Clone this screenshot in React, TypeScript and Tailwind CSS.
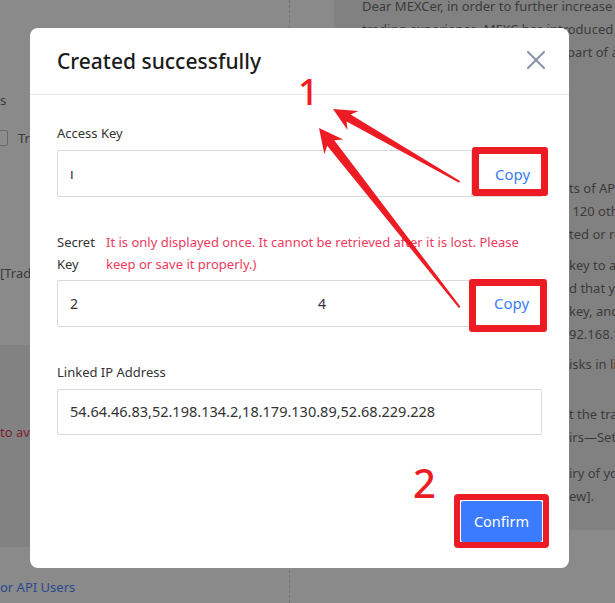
import React from "react";

const RED = "#ed1c24";

function Arrow({ x, y, angle, len, hw, wing, wingLen, notch }: { x: number; y: number; angle: number; len: number; hw: number; wing: number; wingLen: number; notch: number }) {
  const pts = `0,0 ${wingLen},${-wing} ${notch},${-hw} ${len},-1 ${len},1 ${notch},${hw} ${wingLen},${wing}`;
  return <polygon points={pts} fill={RED} transform={`translate(${x} ${y}) rotate(${angle})`} />;
}

export default function App() {
  return (
    <div className="relative w-[615px] h-[603px] overflow-hidden bg-[#8a8a8a] font-['Noto_Sans',sans-serif]">
      {/* page behind the overlay */}
      <div className="flex h-full">
        <div className="w-[290px] h-full border-r border-dashed border-[#767676] flex flex-col text-[13px] leading-[20px] text-[#3a3a3a] whitespace-nowrap overflow-hidden">
          <div className="mt-[90px]">s</div>
          <div className="mt-[20px] flex items-center gap-[10px] -ml-[8px] h-[16px]">
            <span className="w-[16px] h-[16px] border border-[#6a6a6a] rounded-[2px] bg-[#8c8c8c]" />
            <span>Trade</span>
          </div>
          <div className="mt-[117px]">[Trade]</div>
          <div className="mt-[62px] h-[202px] bg-[#828282] pt-[77px] text-[#7e1e35]">to avoid</div>
          <div className="mt-[30px] text-[#2a4a8e]">or API Users</div>
        </div>
        <div className="w-[44px]" />
        <div className="w-[281px] h-[530px] bg-[#818181] pl-[28px] text-[13px] leading-[23px] text-[#3c3c3c] whitespace-nowrap overflow-hidden">
          <div className="-mt-[5.5px]">
            <p>Dear MEXCer, in order to further increase the</p>
            <p>trading experience, MEXC has introduced a</p>
            <p className="pl-[205px]">part of an</p>
          </div>
          <div className="mt-[113px] pl-[207px]">
            <p>ts of API</p>
            <p>&nbsp;120 other</p>
            <p>ted or re</p>
          </div>
          <div className="mt-[8.5px] pl-[207px]">
            <p>key to an</p>
            <p>d that you</p>
            <p>key, and</p>
            <p>92.168.1</p>
          </div>
          <div className="mt-[6.5px] pl-[207px]">
            <p>isks in li</p>
          </div>
          <div className="mt-[27px] pl-[207px]">
            <p>t the tra</p>
            <p>irs—Set</p>
          </div>
          <div className="mt-[13px] pl-[207px]">
            <p>iry of yo</p>
            <p>ew].</p>
          </div>
        </div>
      </div>

      {/* modal */}
      <div className="absolute left-[30px] top-[28px] w-[539px] bg-white rounded-[8px] flex flex-col">
        <div className="h-[67px] flex items-center justify-between pl-[27px] pr-[24px] border-b border-[#ebebeb]">
          <span className="text-[21px] font-medium text-[#1b1b1b] leading-none">Created successfully</span>
          <svg width="18" height="18" viewBox="0 0 18 18" className="mt-[-2px]">
            <path d="M1 1 L17 17 M17 1 L1 17" stroke="#8a93a5" strokeWidth="2" strokeLinecap="round" />
          </svg>
        </div>
        <div className="px-[27px] pt-[28px] pb-[26px] flex flex-col text-[#333]">
          <div className="text-[13px] leading-[20px] mb-[7px]">Access Key</div>
          <div className="flex h-[47px]">
            <div className="flex-1 border border-[#dadada] rounded-l-[2px] flex items-center pl-[12px] text-[14px]">ı</div>
            <div className="relative w-[70px] border-y border-r border-[#dadada] flex items-center justify-center pl-[12px] pt-[2px] text-[15px] text-[#3b7cf5]">
              Copy
              <div className="absolute left-0 -right-[7px] -top-[4px] bottom-0 border-[7px] rounded-[3px]" style={{ borderColor: RED }} />
            </div>
          </div>

          <div className="mt-[34px] flex text-[13px] leading-[22px]">
            <div className="w-[49px] shrink-0">Secret<br />Key</div>
            <div className="text-[#ee3a5e] whitespace-nowrap text-[13px]">
              It is only displayed once. It cannot be retrieved after it is lost. Please<br />keep or save it properly.)
            </div>
          </div>
          <div className="mt-[5px] flex h-[47px]">
            <div className="flex-1 border border-[#dadada] rounded-l-[2px] flex items-center pl-[12px] text-[14px]">
              <span>2</span>
              <span className="ml-[240px]">4</span>
            </div>
            <div className="relative w-[70px] border-y border-r border-[#dadada] flex items-center justify-center pl-[10px] text-[15px] text-[#3b7cf5]">
              Copy
              <div className="absolute -left-[3px] -right-[6px] -top-[2px] -bottom-[6px] border-[7px] rounded-[3px]" style={{ borderColor: RED }} />
            </div>
          </div>

          <div className="mt-[35px] text-[13px] leading-[20px] mb-[7px]">Linked IP Address</div>
          <div className="h-[46px] border border-[#dadada] rounded-[2px] flex items-center pl-[12px] text-[14.5px]">
            54.64.46.83,52.198.134.2,18.179.130.89,52.68.229.228
          </div>

          <div className="mt-[66px] flex justify-end">
            <div className="relative w-[81px] h-[41px] bg-[#3a7bff] rounded-[2px] flex items-center justify-center text-white text-[14.5px]">
              Confirm
              <div className="absolute -left-[7px] -right-[7px] -top-[7px] -bottom-[6px] border-[6px] rounded-[4px]" style={{ borderColor: RED }} />
            </div>
          </div>
        </div>
      </div>

      {/* annotations */}
      <span className="absolute left-[298px] top-[74px] text-[36px] leading-none font-medium" style={{ color: RED }}>1</span>
      <span className="absolute left-[413px] top-[463px] text-[40px] leading-none font-medium" style={{ color: RED }}>2</span>
      <svg className="absolute inset-0 pointer-events-none" width="615" height="603">
        <Arrow x={333} y={109} angle={29.9} len={146} hw={4} wing={11} wingLen={23} notch={18} />
        <Arrow x={319} y={128} angle={51.9} len={228} hw={4.5} wing={12} wingLen={24} notch={19} />
      </svg>
    </div>
  );
}
